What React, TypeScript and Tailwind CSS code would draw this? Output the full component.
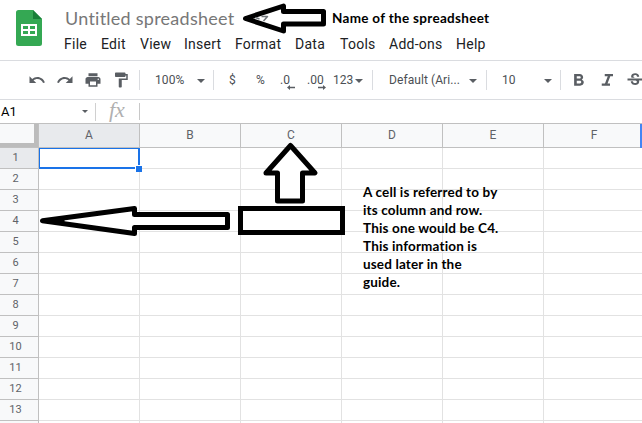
import React from "react";

const roboto = "font-[Roboto,sans-serif]";
const calibri = "font-[Lato,sans-serif]";

const menus = [
  { label: "File", width: "w-[37px]" },
  { label: "Edit", width: "w-[39px]" },
  { label: "View", width: "w-[44px]" },
  { label: "Insert", width: "w-[51px]" },
  { label: "Format", width: "w-[60px]" },
  { label: "Data", width: "w-[45px]" },
  { label: "Tools", width: "w-[49px]" },
  { label: "Add-ons", width: "w-[67px]" },
  { label: "Help", width: "w-[40px]" },
];

const columns = ["A", "B", "C", "D", "E", "F"];
const rows = Array.from({ length: 13 }, (_, i) => i + 1);

function Caret({ small = false }: { small?: boolean }) {
  return (
    <svg className={small ? "h-[3px] w-[6px] shrink-0" : "mt-[2px] h-1 w-2 shrink-0"} viewBox="0 0 8 4" preserveAspectRatio="none">
      <path d="M0 0h8L4 4z" fill="#5a5e63" />
    </svg>
  );
}

function Divider() {
  return <div className="h-5 w-px shrink-0 bg-[#dadce0]" />;
}

function Glyph({ d, className }: { d: string; className: string }) {
  return (
    <svg className={`h-[18px] w-[18px] shrink-0 ${className}`} viewBox="0 0 24 24" fill="#5a5e63">
      <path d={d} />
    </svg>
  );
}

function Logo() {
  return (
    <svg className="mt-[10px] h-9 w-[26px] shrink-0" viewBox="0 0 26 36">
      <path d="M2.5 0H17l9 9v24.5a2.5 2.5 0 0 1-2.5 2.5h-21A2.5 2.5 0 0 1 0 33.5V2.5A2.5 2.5 0 0 1 2.5 0z" fill="#34a853" />
      <path d="M17 0l9 9h-9z" fill="#188038" />
      <path fillRule="evenodd" d="M5 14h16v12H5zM7 16v3h5v-3zM14 16v3h5v-3zM7 21v3h5v-3zM14 21v3h5v-3z" fill="#fff" />
    </svg>
  );
}

function Header() {
  return (
    <header className="flex h-[61px] shrink-0 border-b border-[#dadce0] pl-4">
      <Logo />
      <div className="ml-[22px] flex flex-col">
        <div className="mt-[6px] flex h-6 items-center">
          <div className="w-[268px] whitespace-nowrap pl-px font-[Lato,sans-serif] text-[18px] leading-6 tracking-[0.25px] text-[#777]">
            Untitled spreadsheet
          </div>
          <div className={`whitespace-nowrap ${calibri} text-[13.5px] font-bold leading-6 tracking-[0.3px] text-black`}>
            Name of the spreadsheet
          </div>
        </div>
        <nav className={`mt-1 flex h-5 ${roboto} text-sm leading-5 tracking-[0.25px] text-[#202124]`}>
          {menus.map((m) => (
            <span key={m.label} className={`${m.width} shrink-0 whitespace-nowrap`}>{m.label}</span>
          ))}
        </nav>
      </div>
    </header>
  );
}

function DecimalButton({ label, right = false }: { label: string; right?: boolean }) {
  return (
    <div className="relative h-5 whitespace-nowrap leading-5">
      {label}
      <svg className={`absolute top-[15px] h-[5px] w-2 ${right ? "right-[-2px]" : "right-[-5px]"}`} viewBox="0 0 8 5" fill="#5a5e63">
        <path d={right ? "M0 1.700h5V0l3 2.500L5 5V3.300H0z" : "M8 1.700H3V0L0 2.500 3 5V3.300h5z"} />
      </svg>
    </div>
  );
}

function Toolbar() {
  return (
    <div className={`flex h-[39px] shrink-0 items-center overflow-hidden border-b border-[#dadce0] pl-7 ${roboto} text-xs text-[#4b4f54]`}>
      <Glyph className="" d="M12.5 8c-2.65 0-5.05.99-6.9 2.6L2 7v9h9l-3.62-3.62c1.39-1.16 3.16-1.88 5.12-1.88 3.54 0 6.55 2.31 7.6 5.5l2.37-.78C21.08 11.03 17.15 8 12.5 8z" />
      <Glyph className="ml-[10px]" d="M18.4 10.6C16.55 8.99 14.15 8 11.5 8c-4.65 0-8.58 3.03-9.96 7.22L3.9 16c1.05-3.19 4.05-5.5 7.6-5.5 1.95 0 3.73.72 5.12 1.88L13 16h9V7l-3.6 3.6z" />
      <Glyph className="ml-[10px]" d="M19 8H5c-1.66 0-3 1.34-3 3v6h4v4h12v-4h4v-6c0-1.66-1.34-3-3-3zm-3 11H8v-5h8v5zm3-7c-.55 0-1-.45-1-1s.45-1 1-1 1 .45 1 1-.45 1-1 1zm-1-9H6v4h12V3z" />
      <Glyph className="ml-[10px]" d="M18 4V3c0-.55-.45-1-1-1H5c-.55 0-1 .45-1 1v4c0 .55.45 1 1 1h12c.55 0 1-.45 1-1V6h1v4H9v11c0 .55.45 1 1 1h2c.55 0 1-.45 1-1v-9h8V4h-3z" />
      <div className="w-[9px] shrink-0" />
      <Divider />
      <span className="ml-[15px] w-[42px] shrink-0 tracking-[0.1px]">100%</span>
      <Caret />
      <div className="w-2 shrink-0" />
      <Divider />
      <span className="ml-[15px] w-[27px] shrink-0">$</span>
      <span className="w-6 shrink-0">%</span>
      <div className="w-[27px] shrink-0"><div className="inline-block"><DecimalButton label=".0" /></div></div>
      <div className="w-[26px] shrink-0"><div className="inline-block"><DecimalButton label=".00" right /></div></div>
      <span className="w-[22px] shrink-0">123</span>
      <Caret />
      <div className="w-[9px] shrink-0" />
      <Divider />
      <span className="ml-[16px] w-[80px] shrink-0 whitespace-nowrap tracking-[0.08px]">Default (Ari...</span>
      <Caret />
      <div className="w-[9px] shrink-0" />
      <Divider />
      <span className="ml-[15px] w-[42px] shrink-0">10</span>
      <Caret />
      <div className="w-2 shrink-0" />
      <Divider />
      <svg className="ml-[9px] h-[18px] w-[18px] shrink-0" viewBox="0 0 24 24" fill="#5a5e63">
        <path d="M15.6 11.6c1.2-.8 1.9-1.9 1.9-3.2C17.5 5.900 15.600 4 13 4H5.500v15.500h8c2.700 0 4.900-1.900 4.900-4.500 0-1.500-1-2.800-2.800-3.400zM9 7h3.800c.9 0 1.500.6 1.500 1.500S13.700 10 12.800 10H9zm4.300 9.500H9V13h4.300c1 0 1.700.8 1.700 1.700s-.7 1.800-1.700 1.800z" />
      </svg>
      <Glyph className="ml-[10px]" d="M9 4v3h4l-3.700 9.500H5v3h11v-3h-3.300L16.400 7H20V4z" />
      <Glyph className="ml-[10px]" d="M6.850 7.080C6.850 4.370 9.450 3 12.240 3c1.640 0 3 .49 3.900 1.280.77.65 1.460 1.730 1.460 3.240h-3.010c0-.31-.05-.59-.15-.85-.29-.86-1.200-1.280-2.250-1.280-1.860 0-2.340 1.020-2.340 1.700 0 .48.25.88.74 1.210.38.25.77.48 1.410.7H7.390c-.21-.34-.54-.89-.54-1.920zM22 12.500v-2.500H2v2.500h10.620c1.150.45 1.960.75 1.960 1.970 0 1-.81 1.670-2.280 1.670-1.540 0-2.930-.54-2.930-2.510H6.400c0 .55.08 1.130.24 1.580.81 2.290 3.290 3.300 5.670 3.300 2.270 0 5.300-.89 5.300-4.050 0-.3-.01-1.160-.48-1.940H22z" />
    </div>
  );
}

function FormulaBar() {
  return (
    <div className={`flex h-6 shrink-0 items-center border-b border-[#c0c0c0] ${roboto}`}>
      <span className="w-[82px] pl-px text-[13px] text-black">A1</span>
      <Caret small />
      <div className="ml-[7px] h-[18px] w-px bg-[#d0d0d0]" />
      <span className="ml-[13px] w-[30px] whitespace-nowrap pb-[3px] font-['Liberation_Serif',serif] text-[22px] italic leading-5 text-[#b0b0b0]">fx</span>
      <div className="h-[17px] w-px bg-[#c8c8c8]" />
    </div>
  );
}

function Sheet() {
  return (
    <div className={`relative flex flex-1 flex-col overflow-hidden ${roboto} text-xs text-[#5f6368]`}>
      <div className="flex h-6 shrink-0 border-b border-[#c0c0c0] bg-[#f8f9fa]">
        <div className="w-[38px] shrink-0 border-b-4 border-r-4 border-[#bcbcbc]" />
        {columns.map((c) => (
          <div
            key={c}
            className={`flex w-[101px] shrink-0 items-center justify-center border-l border-[#c0c0c0] pb-px ${c === "A" ? "bg-[#e8eaed]" : ""}`}
          >
            {c}
          </div>
        ))}
      </div>
      {rows.map((r) => (
        <div key={r} className="flex h-[21px] shrink-0">
          <div className={`flex w-[39px] shrink-0 items-center border-b border-r border-[#c0c0c0] ${r === 1 ? "bg-[#e8eaed]" : "bg-[#f8f9fa]"}`}>
            <span className="w-[31px] text-center text-[11px]">{r}</span>
          </div>
          {columns.map((c) => (
            <div key={c} className="w-[101px] shrink-0 border-b border-r border-[#e2e2e2]" />
          ))}
        </div>
      ))}
      <div className="flex flex-1">
        <div className="w-[39px] shrink-0 border-r border-[#c0c0c0] bg-[#f8f9fa]" />
        {columns.map((c) => (
          <div key={c} className="w-[101px] shrink-0 border-r border-[#e2e2e2]" />
        ))}
      </div>
      <div className="absolute left-[39px] top-[24px] h-[21px] w-[101px] border-2 border-l border-t border-[#1a73e8]" />
      <div className="absolute left-[135px] top-[41px] h-[7px] w-[7px] border-l border-t border-white bg-[#1a73e8]" />
      <div className="absolute right-0 top-0 h-6 w-[2px] bg-[#4285f4]" />
      <div className={`absolute left-[363px] top-[59px] whitespace-nowrap ${calibri} text-[13.5px] font-bold leading-[18px] tracking-[0.15px] text-black`}>
        A cell is referred to by<br />
        its column and row.<br />
        This one would be C4.<br />
        This information is<br />
        used later in the<br />
        guide.
      </div>
    </div>
  );
}

function Arrows() {
  return (
    <svg className="pointer-events-none absolute inset-0 h-[423px] w-[642px]" viewBox="0 0 642 423" fill="#fff" stroke="#000" strokeWidth="5" strokeLinejoin="round">
      <path d="M245.500 18.500L283.500 6v5.500h40V24h-40v7z" />
      <path d="M255.500 17.500l4 1.500M261.500 16.500h6l-4 4.500" fill="none" stroke="#70757a" strokeWidth="1.500" />
      <path d="M42.500 220.700L134.500 208.500v6h93v13h-93v6z" />
      <path d="M42.500 220.700L64 217.800v5.800z" fill="#000" strokeWidth="1" />
      <path d="M290.500 145.500L315 173h-12.500v28h-25v-28H266z" />
      <path d="M240.500 208.500h102v24h-102z" strokeLinejoin="miter" />
    </svg>
  );
}

export default function App() {
  return (
    <div className="relative flex h-[423px] w-[642px] flex-col overflow-hidden bg-white">
      <Header />
      <Toolbar />
      <FormulaBar />
      <Sheet />
      <Arrows />
    </div>
  );
}
